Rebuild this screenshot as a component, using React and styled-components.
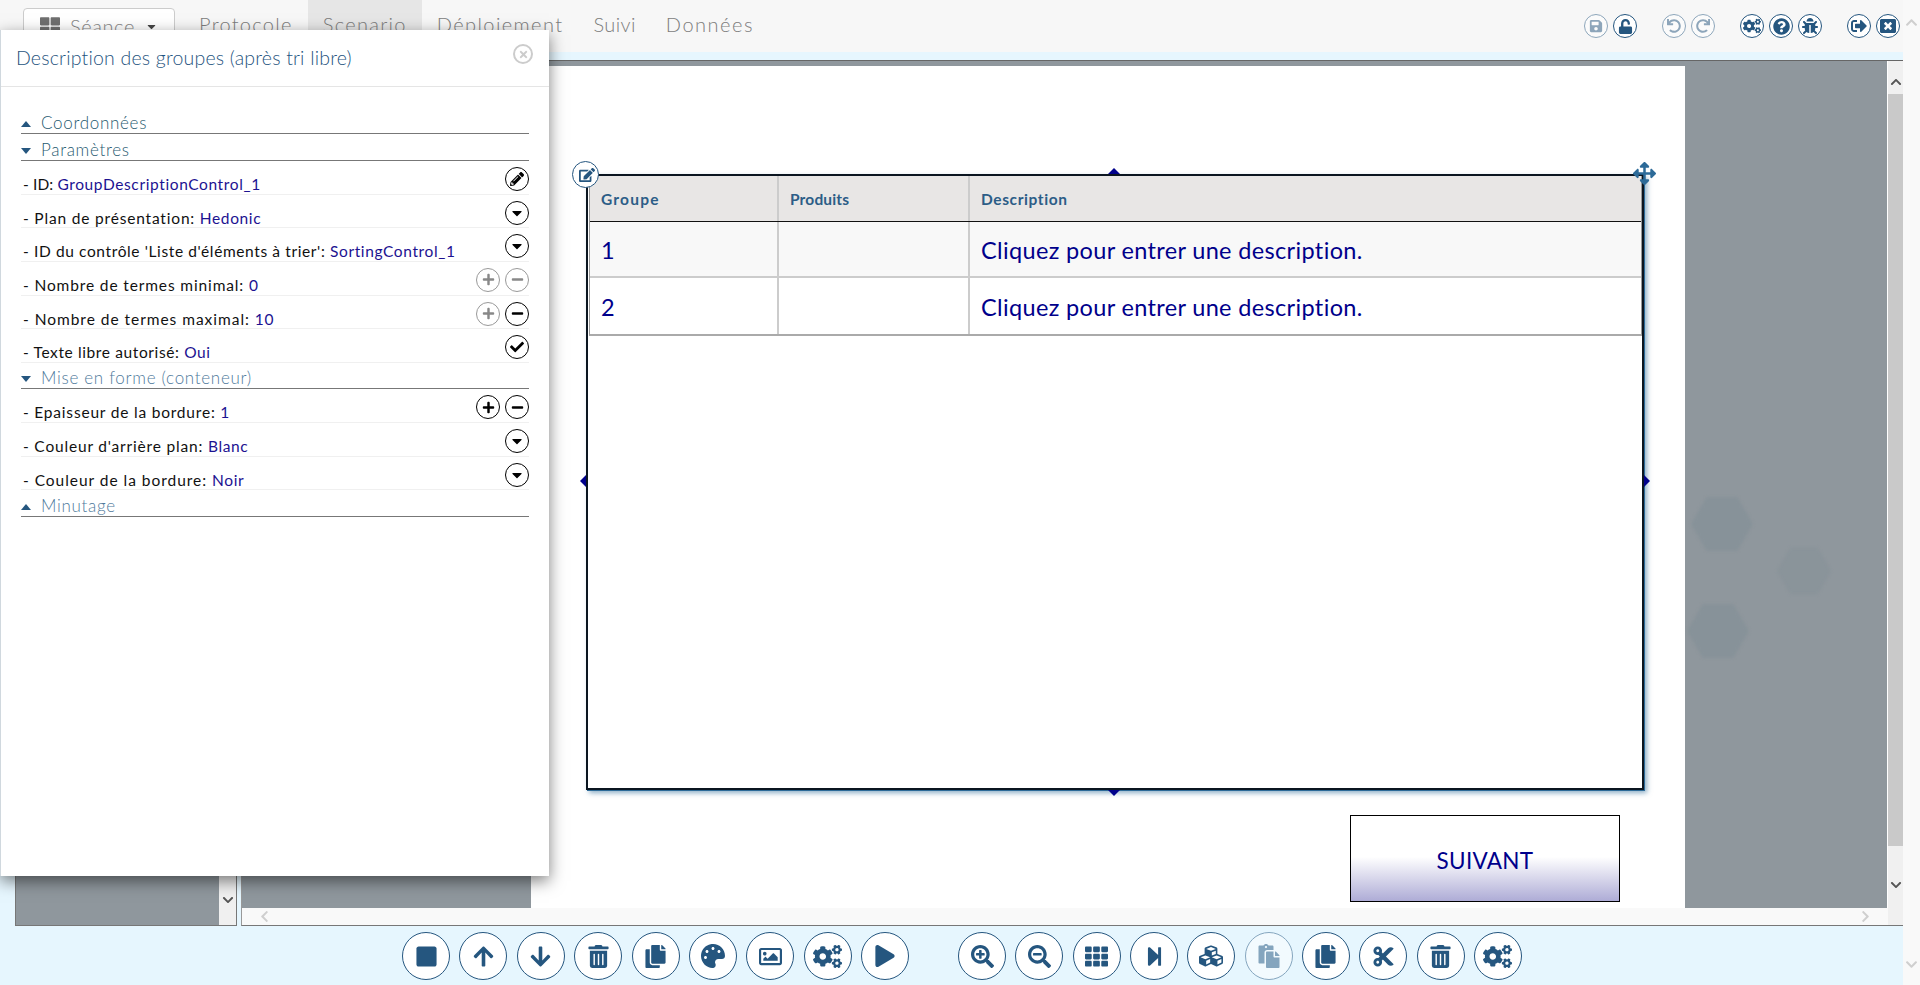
import React from "react";
import styled, { createGlobalStyle } from "styled-components";
import {
  FaArrowDown, FaArrowUp, FaArrowsAlt, FaBug, FaCaretDown, FaCheck, FaChevronDown, FaChevronLeft,
  FaChevronRight, FaChevronUp, FaCogs, FaCopy, FaCubes, FaCut, FaEdit, FaMinus, FaPalette, FaPaste,
  FaPencilAlt, FaPlay, FaPlus, FaQuestionCircle, FaRedo, FaRegImage, FaSave, FaSearchMinus,
  FaSearchPlus, FaSignOutAlt, FaStepForward, FaStop, FaTh, FaThLarge, FaTimes, FaTrashAlt, FaUndo,
  FaUnlock, FaWindowClose,
} from "react-icons/fa";

const BLUE = "#25567f";
const VALUE = "#1c1291";
const NAVY = "#00008b";

const GlobalStyle = createGlobalStyle`
  html, body {
    margin: 0;
    height: 100%;
    overflow: hidden;
    background: #f9f9f9;
  }
  * { box-sizing: border-box; }
`;

const Page = styled.div`
  position: relative;
  display: flex;
  width: 1920px;
  height: 985px;
  overflow: hidden;
  font-family: Lato, "Liberation Sans", sans-serif;
`;

const Main = styled.div`
  display: flex;
  flex-direction: column;
  width: 1903px;
  background: #e6f6fe;
`;

const PageScroll = styled.div`
  display: flex;
  flex-direction: column;
  justify-content: space-between;
  align-items: center;
  width: 17px;
  padding: 16px 0 14px;
  color: #cfcfcf;
  font-size: 13px;
  background: #f9f9f9;
`;

const Header = styled.header`
  display: flex;
  align-items: stretch;
  justify-content: space-between;
  height: 52px;
  padding: 0 3px 0 23px;
  background: #f7f7f7;
`;

const Nav = styled.nav`
  display: flex;
  align-items: stretch;
`;

const SessionButton = styled.div`
  display: flex;
  align-items: center;
  gap: 10px;
  width: 152px;
  height: 40px;
  margin: 8px 9px 0 0;
  padding: 0 16px 4px;
  color: #888;
  font-size: 20px;
  font-weight: 300;
  letter-spacing: 0.6px;
  background: #fff;
  border: 1px solid #ccc;
  border-radius: 4px;

  svg:first-child { color: #6f6f6f; font-size: 20px; }
  svg:last-child { color: #444; font-size: 13px; }
`;

const NavTab = styled.div`
  display: flex;
  align-items: center;
  padding: 0 15px 4px;
  color: #7d7d7d;
  font-size: 20px;
  font-weight: 300;
  letter-spacing: ${(p) => p.$spacing}px;
  background: ${(p) => (p.$active ? "#e6e6e6" : "transparent")};
`;

const HeaderTools = styled.div`
  display: flex;
  align-items: flex-start;
  padding-top: 14px;
`;

const ToolGroup = styled.div`
  display: flex;
  gap: ${(p) => p.$gap}px;
  margin-left: ${(p) => p.$left || 0}px;
`;

const RoundIcon = styled.button`
  display: flex;
  flex: none;
  align-items: center;
  justify-content: center;
  width: ${(p) => p.$size}px;
  height: ${(p) => p.$size}px;
  padding: 0;
  color: ${BLUE};
  font-size: ${(p) => p.$icon}px;
  background: #fff;
  border: 1.5px solid ${BLUE};
  border-radius: 50%;
  opacity: ${(p) => (p.$off ? 0.5 : 1)};
`;

const Strip = styled.div`
  flex: none;
  height: 8px;
  background: #e6f6fe;
`;

const Workspace = styled.div`
  display: flex;
  flex: 1;
  min-height: 0;
  padding-left: 15px;
  gap: 4px;
`;

const LeftPanel = styled.div`
  display: flex;
  width: 222px;
  background: #8f979d;
  border-top: 1px solid #666;
  border-bottom: 1px solid #777;
  border-left: 1px solid #777;
`;

const LeftScroll = styled.div`
  display: flex;
  flex: none;
  align-items: flex-end;
  justify-content: center;
  width: 18px;
  margin-left: auto;
  padding-bottom: 19px;
  color: #555;
  font-size: 12px;
  background: #f0f0f0;
  border-right: 1px solid #777;
`;

const Viewer = styled.div`
  display: grid;
  grid-template-columns: minmax(0, 1fr) 15px;
  grid-template-rows: minmax(0, 1fr) 17px;
  flex: 1;
  min-width: 0;
  background: #f9f9f9;
  border-top: 1px solid #666;
  border-bottom: 1px solid #777;
  border-left: 1px solid #999;
`;

const Stage = styled.div`
  position: relative;
  grid-column: 1;
  grid-row: 1;
  padding: 5px 0 0 289px;
  overflow: hidden;
  background: #8f979d;
  border-right: 1px solid #fff;
`;

const Watermark = styled.svg`
  position: absolute;
  top: 388px;
  left: 1440px;
  filter: blur(1.5px);
`;

const Canvas = styled.div`
  display: flex;
  flex-direction: column;
  width: 1154px;
  height: 100%;
  padding: 108px 0 0 55px;
  background: #fff;
`;

const Frame = styled.div`
  position: relative;
  flex: none;
  width: 1058px;
  height: 616px;
  background: #fff;
  border: 2px solid #0b1520;
  box-shadow: 1px 1px 0 #2c6a98, 3px 3px 5px rgba(44, 106, 152, 0.55);
`;

const Handle = styled.span`
  position: absolute;
  width: 0;
  height: 0;
  border: 6px solid transparent;
  ${(p) => p.$side === "top" && `top: -8px; left: 520px; border-top: 0; border-bottom-color: ${NAVY};`}
  ${(p) => p.$side === "bottom" && `bottom: -8px; left: 520px; border-bottom: 0; border-top-color: ${NAVY};`}
  ${(p) => p.$side === "left" && `top: 299px; left: -8px; border-left: 0; border-right-color: ${NAVY};`}
  ${(p) => p.$side === "right" && `top: 299px; right: -8px; border-right: 0; border-left-color: ${NAVY};`}
`;

const EditBadge = styled.span`
  position: absolute;
  top: -15px;
  left: -16px;
  display: flex;
  align-items: center;
  justify-content: center;
  width: 27px;
  height: 27px;
  padding-left: 2px;
  color: ${BLUE};
  font-size: 16px;
  background: #fff;
  border: 1.5px solid ${BLUE};
  border-radius: 50%;
`;

const MoveBadge = styled.span`
  position: absolute;
  top: -14px;
  right: -14px;
  display: flex;
  color: #2c6a98;
  font-size: 23px;
`;

const Table = styled.div`
  margin: 0 0 0 1px;
  border-right: 1px solid #999;
  border-bottom: 2px solid #aaa;
  border-left: 1px solid #999;
`;

const TableRow = styled.div`
  display: grid;
  grid-template-columns: 187px 191px 1fr;
  height: ${(p) => (p.$head ? 46 : 56)}px;
  background: ${(p) => p.$bg};
  border-bottom: ${(p) => (p.$head ? "1.5px solid #111" : p.$last ? "0" : "2px solid #ccc")};
`;

const Cell = styled.div`
  display: flex;
  align-items: center;
  padding: ${(p) => (p.$head ? "0" : "2px")} 0 0 11px;
  border-left: ${(p) => (p.$first ? "0" : "2px solid #ccc")};
  color: ${(p) => (p.$head ? "#2c5d87" : NAVY)};
  font-size: ${(p) => (p.$head ? 15.5 : 23.5)}px;
  font-weight: ${(p) => (p.$head ? 700 : 400)};
  letter-spacing: ${(p) => p.$spacing ?? 0.35}px;
`;

const NextButton = styled.div`
  display: flex;
  flex: none;
  align-items: flex-end;
  justify-content: center;
  width: 270px;
  height: 87px;
  margin: 25px 0 0 764px;
  padding-bottom: 27px;
  color: ${NAVY};
  font-size: 22.5px;
  letter-spacing: 0.3px;
  background: linear-gradient(#fff 0%, #fff 48%, #aeacd6 100%);
  border: 1.5px solid #000;
`;

const VScroll = styled.div`
  display: flex;
  flex-direction: column;
  align-items: center;
  grid-column: 2;
  grid-row: 1 / 3;
  padding-top: 15px;
  color: #555;
  font-size: 12px;
  background: #f0f0f0;
`;

const VThumb = styled.div`
  flex: none;
  width: 100%;
  height: 752px;
  margin: 6px 0 33px;
  background: #c9c9c9;
`;

const HScroll = styled.div`
  display: flex;
  grid-column: 1;
  grid-row: 2;
  align-items: center;
  justify-content: space-between;
  padding: 0 16px 0 16px;
  color: #cfcfcf;
  font-size: 13px;
`;

const BottomBar = styled.footer`
  display: flex;
  flex: none;
  align-items: flex-start;
  height: 59px;
  padding: 6px 0 0 402px;
  background: #e6f6fe;
`;

const Dialog = styled.aside`
  position: absolute;
  top: 30px;
  left: 0;
  display: flex;
  flex-direction: column;
  width: 549px;
  height: 846px;
  background: #fff;
  border-left: 1px solid #d0d8de;
  box-shadow: 0 5px 15px rgba(0, 0, 0, 0.5);
`;

const DialogHead = styled.div`
  display: flex;
  flex: none;
  align-items: flex-start;
  justify-content: space-between;
  height: 57px;
  padding: 16px 16px 0 15px;
  border-bottom: 1px solid #e5e5e5;
`;

const DialogTitle = styled.h4`
  margin: 0;
  color: #1f5480;
  font-size: 19.5px;
  font-weight: 300;
  letter-spacing: 0.2px;
`;

const CloseIcon = styled.span`
  display: flex;
  align-items: center;
  justify-content: center;
  width: 20px;
  height: 20px;
  margin-top: -2px;
  color: #ccc;
  font-size: 11px;
  border: 2px solid #ccc;
  border-radius: 50%;
`;

const DialogBody = styled.div`
  padding: 26px 20px 0 20px;
`;

const Section = styled.div`
  display: flex;
  align-items: flex-end;
  gap: 10px;
  height: ${(p) => p.$height}px;
  padding-bottom: 0;
  color: ${(p) => p.$color};
  font-size: 17px;
  font-weight: 300;
  letter-spacing: 0.7px;
  line-height: 20px;
  border-bottom: 1.5px solid #777;
`;

const Caret = styled.span`
  width: 0;
  height: 0;
  margin-bottom: 6px;
  border-right: 5px solid transparent;
  border-left: 5px solid transparent;
  ${(p) => (p.$open ? `border-top: 6px solid ${BLUE};` : `border-bottom: 6px solid ${BLUE};`)}
`;

const Row = styled.div`
  display: flex;
  justify-content: space-between;
  height: 33.67px;
  padding: 6px 0 0 2px;
  border-bottom: 1px solid #f0f0f0;
`;

const RowLabel = styled.div`
  margin-top: 8px;
  color: #111;
  font-size: 15.5px;
  letter-spacing: ${(p) => 0.62 + p.$extra}px;
  line-height: 19px;
  white-space: nowrap;

  span { color: ${VALUE}; letter-spacing: 0.62px; }
`;

const RowButtons = styled.div`
  display: flex;
  gap: 5px;
`;

const RowButton = styled.button`
  display: flex;
  align-items: center;
  justify-content: center;
  width: 24px;
  height: 24px;
  padding: 0;
  color: ${(p) => (p.$off ? "#888" : "#000")};
  font-size: ${(p) => p.$icon}px;
  background: #fff;
  border: 1.5px solid ${(p) => (p.$off ? "#999" : "#000")};
  border-radius: 50%;
`;

const topGroups = [
  { left: 0, items: [[FaSave, 14, true], [FaUnlock, 15]] },
  { left: 25, items: [[FaUndo, 14, true], [FaRedo, 14, true]] },
  { left: 25, items: [[FaCogs, 18], [FaQuestionCircle, 17], [FaBug, 16]] },
  { left: 25, items: [[FaSignOutAlt, 16], [FaWindowClose, 16]] },
];

const leftTools = [
  [FaStop, 23], [FaArrowUp, 23], [FaArrowDown, 23], [FaTrashAlt, 23], [FaCopy, 23],
  [FaPalette, 24], [FaRegImage, 23], [FaCogs, 29], [FaPlay, 22],
];

const rightTools = [
  [FaSearchPlus, 23], [FaSearchMinus, 23], [FaTh, 23], [FaStepForward, 21], [FaCubes, 24],
  [FaPaste, 24, true], [FaCopy, 23], [FaCut, 23], [FaTrashAlt, 23], [FaCogs, 29],
];

const params = [
  { label: "- ID: ", value: "GroupDescriptionControl_1", extra: -0.5, buttons: [[FaPencilAlt, 14]] },
  { label: "- Plan de présentation: ", value: "Hedonic", extra: 0.2, buttons: [[FaCaretDown, 16]] },
  { label: "- ID du contrôle 'Liste d'éléments à trier': ", value: "SortingControl_1", extra: 0, buttons: [[FaCaretDown, 16]] },
  { label: "- Nombre de termes minimal: ", value: "0", extra: 0.25, buttons: [[FaPlus, 13, true], [FaMinus, 13, true]] },
  { label: "- Nombre de termes maximal: ", value: "10", extra: 0.35, buttons: [[FaPlus, 13, true], [FaMinus, 13]] },
  { label: "- Texte libre autorisé: ", value: "Oui", extra: 0, buttons: [[FaCheck, 14]] },
];

const styleParams = [
  { label: "- Epaisseur de la bordure: ", value: "1", extra: 0.18, buttons: [[FaPlus, 13], [FaMinus, 13]] },
  { label: "- Couleur d'arrière plan: ", value: "Blanc", extra: 0.2, buttons: [[FaCaretDown, 16]] },
  { label: "- Couleur de la bordure: ", value: "Noir", extra: 0.35, buttons: [[FaCaretDown, 16]] },
];

const Hexagon = ({ x, y, r, opacity }) => {
  const points = [0, 60, 120, 180, 240, 300]
    .map((a) => {
      const rad = (a * Math.PI) / 180;
      return `${x + r * Math.cos(rad)},${y + r * Math.sin(rad)}`;
    })
    .join(" ");
  return <polygon points={points} fill="#7f8d95" fillOpacity={opacity} />;
};

const ParamRow = ({ label, value, extra, buttons }) => (
  <Row>
    <RowLabel $extra={extra}>
      {label}
      <span>{value}</span>
    </RowLabel>
    <RowButtons>
      {buttons.map(([Icon, size, off], i) => (
        <RowButton key={i} $icon={size} $off={off}>
          <Icon />
        </RowButton>
      ))}
    </RowButtons>
  </Row>
);

const Tools = ({ items, size, gap, left }) => (
  <ToolGroup $gap={gap} $left={left}>
    {items.map(([Icon, icon, off], i) => (
      <RoundIcon key={i} $size={size} $icon={icon} $off={off}>
        <Icon />
      </RoundIcon>
    ))}
  </ToolGroup>
);

export default function App() {
  return (
    <Page>
      <GlobalStyle />
      <Main>
        <Header>
          <Nav>
            <SessionButton>
              <FaThLarge />
              Séance
              <FaCaretDown />
            </SessionButton>
            <NavTab $spacing={1.3}>Protocole</NavTab>
            <NavTab $spacing={1.3} $active>Scenario</NavTab>
            <NavTab $spacing={1.4}>Déploiement</NavTab>
            <NavTab $spacing={0.4}>Suivi</NavTab>
            <NavTab $spacing={1.5}>Données</NavTab>
          </Nav>
          <HeaderTools>
            {topGroups.map((g, i) => (
              <Tools key={i} items={g.items} size={24} gap={5} left={g.left} />
            ))}
          </HeaderTools>
        </Header>
        <Strip />
        <Workspace>
          <LeftPanel>
            <LeftScroll>
              <FaChevronDown />
            </LeftScroll>
          </LeftPanel>
          <Viewer>
            <Stage>
              <Watermark width="200" height="280">
                <Hexagon x={40} y={75} r={31} opacity={0.5} />
                <Hexagon x={122} y={122} r={27} opacity={0.28} />
                <Hexagon x={36} y={182} r={31} opacity={0.5} />
              </Watermark>
              <Canvas>
                <Frame>
                  <Handle $side="top" />
                  <Handle $side="bottom" />
                  <Handle $side="left" />
                  <Handle $side="right" />
                  <EditBadge>
                    <FaEdit />
                  </EditBadge>
                  <MoveBadge>
                    <FaArrowsAlt />
                  </MoveBadge>
                  <Table>
                    <TableRow $head $bg="#e8e6e5">
                      <Cell $head $first $spacing={1.2}>Groupe</Cell>
                      <Cell $head $spacing={0.15}>Produits</Cell>
                      <Cell $head $spacing={0.6}>Description</Cell>
                    </TableRow>
                    <TableRow $bg="#f8f8f8">
                      <Cell $first>1</Cell>
                      <Cell />
                      <Cell>Cliquez pour entrer une description.</Cell>
                    </TableRow>
                    <TableRow $bg="#fff" $last>
                      <Cell $first>2</Cell>
                      <Cell />
                      <Cell>Cliquez pour entrer une description.</Cell>
                    </TableRow>
                  </Table>
                </Frame>
                <NextButton>SUIVANT</NextButton>
              </Canvas>
            </Stage>
            <VScroll>
              <FaChevronUp />
              <VThumb />
              <FaChevronDown />
            </VScroll>
            <HScroll>
              <FaChevronLeft />
              <FaChevronRight />
            </HScroll>
          </Viewer>
        </Workspace>
        <BottomBar>
          <Tools items={leftTools} size={48} gap={9.4} />
          <Tools items={rightTools} size={48} gap={9.3} left={49} />
        </BottomBar>
      </Main>
      <PageScroll>
        <FaChevronUp />
        <FaChevronDown />
      </PageScroll>
      <Dialog>
        <DialogHead>
          <DialogTitle>Description des groupes (après tri libre)</DialogTitle>
          <CloseIcon>
            <FaTimes />
          </CloseIcon>
        </DialogHead>
        <DialogBody>
          <Section $height={21} $color="#1f5a70">
            <Caret />
            Coordonnées
          </Section>
          <Section $height={27} $color="#1f5a70">
            <Caret $open />
            Paramètres
          </Section>
          {params.map((p) => (
            <ParamRow key={p.label} {...p} />
          ))}
          <Section $height={26.5} $color="#4f7a9c">
            <Caret $open />
            Mise en forme (conteneur)
          </Section>
          {styleParams.map((p) => (
            <ParamRow key={p.label} {...p} />
          ))}
          <Section $height={27} $color="#4f7a9c">
            <Caret />
            Minutage
          </Section>
        </DialogBody>
      </Dialog>
    </Page>
  );
}
